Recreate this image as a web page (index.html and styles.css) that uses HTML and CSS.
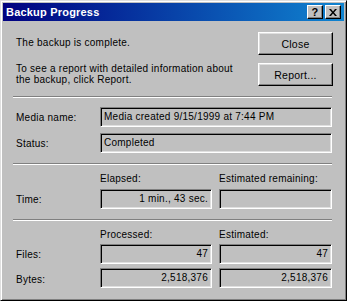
FILE: index.html
```html
<!DOCTYPE html>
<html lang="en">
<head>
    <meta charset="UTF-8">
    <meta name="viewport" content="width=device-width, initial-scale=1.0">
    <title>Backup Progress</title>
    <link rel="stylesheet" href="styles.css">
</head>
<body>
    <div class="window">
        <div class="titlebar">
            <span class="title">Backup Progress</span>
            <div class="title-buttons">
                <span class="tbtn help">?</span>
                <span class="tbtn">
                    <svg width="8" height="7" viewBox="0 0 8 7">
                        <path d="M0 0h2l2 2.5L6 0h2L5 3.5 8 7H6L4 4.5 2 7H0l3-3.5z" fill="#000"/>
                    </svg>
                </span>
            </div>
        </div>

        <div class="content">
            <div class="summary">
                <div class="messages">
                    <p>The backup is complete.</p>
                    <p class="report-note">To see a report with detailed information about<br>the backup, click Report.</p>
                </div>
                <div class="actions">
                    <button class="btn">Close</button>
                    <button class="btn">Report...</button>
                </div>
            </div>

            <div class="sep"></div>

            <div class="grid media">
                <span class="label">Media name:</span>
                <div class="field wide">Media created 9/15/1999 at 7:44 PM</div>
                <span class="label">Status:</span>
                <div class="field wide">Completed</div>
            </div>

            <div class="sep"></div>

            <div class="grid time">
                <span></span>
                <span class="colhead">Elapsed:</span>
                <span class="colhead">Estimated remaining:</span>
                <span class="label">Time:</span>
                <div class="field num">1 min., 43 sec.</div>
                <div class="field num"></div>
            </div>

            <div class="sep"></div>

            <div class="grid counts">
                <span></span>
                <span class="colhead">Processed:</span>
                <span class="colhead">Estimated:</span>
                <span class="label">Files:</span>
                <div class="field num">47</div>
                <div class="field num">47</div>
                <span class="label">Bytes:</span>
                <div class="field num">2,518,376</div>
                <div class="field num">2,518,376</div>
            </div>
        </div>
    </div>
</body>
</html>
```

FILE: styles.css
```css
body {
    margin: 0;
    background: #c0c0c0;
    font-family: "Liberation Sans", Arial, sans-serif;
    font-size: 10px;
    line-height: 11px;
    letter-spacing: 0.25px;
    color: #000;
}
.window {
    width: 347px;
    height: 301px;
    box-sizing: border-box;
    background: #c0c0c0;
    border-top: 1px solid #dfdfdf;
    border-left: 1px solid #dfdfdf;
    border-right: 1px solid #000;
    border-bottom: 1px solid #000;
    box-shadow: inset 1px 1px #fff, inset -1px -1px #808080;
    padding: 2px;
}
.titlebar {
    height: 18px;
    display: flex;
    align-items: center;
    justify-content: space-between;
    padding: 0 3px 0 3px;
    background: linear-gradient(to right, #000080, #1084d0);
}
.title {
    color: #fff;
    font-weight: bold;
    font-size: 11px;
    letter-spacing: 0.2px;
}
.title-buttons {
    display: flex;
    gap: 2px;
}
.tbtn {
    width: 16px;
    height: 14px;
    box-sizing: border-box;
    display: flex;
    align-items: center;
    justify-content: center;
    background: #c0c0c0;
    border-top: 1px solid #fff;
    border-left: 1px solid #fff;
    border-right: 1px solid #000;
    border-bottom: 1px solid #000;
    box-shadow: inset -1px -1px #808080;
}
.help {
    font-weight: bold;
    font-size: 11px;
}
.content {
    padding: 11px 12px 0 10px;
}
.summary {
    display: flex;
    justify-content: space-between;
}
.messages {
    padding: 5px 0 0 3px;
}
.messages p {
    margin: 0;
}
.report-note {
    margin-top: 15px !important;
}
.actions {
    display: flex;
    flex-direction: column;
    gap: 8px;
    margin-right: -1px;
}
.btn {
    width: 75px;
    height: 23px;
    padding: 0;
    font-family: inherit;
    font-size: 10.5px;
    letter-spacing: 0.25px;
    color: #000;
    background: #c0c0c0;
    border-top: 1px solid #fff;
    border-left: 1px solid #fff;
    border-right: 1px solid #000;
    border-bottom: 1px solid #000;
    box-shadow: inset -1px -1px #808080, inset 1px 1px #dfdfdf;
}
.sep {
    height: 0;
    border-top: 1px solid #808080;
    border-bottom: 1px solid #fff;
    margin-top: 10px;
}
.grid {
    display: grid;
    grid-template-columns: 80px 112px 113px;
    column-gap: 7px;
    align-items: center;
}
.media {
    margin-top: 9px;
    row-gap: 6px;
}
.time {
    margin-top: 8px;
    row-gap: 5px;
}
.counts {
    margin-top: 8px;
    row-gap: 4px;
}
.counts .field + .label {
    margin-top: 3px;
}
.label {
    padding-left: 3px;
}
.field {
    height: 20px;
    box-sizing: border-box;
    line-height: 18px;
    padding: 0 3px;
    white-space: nowrap;
    border-top: 1px solid #808080;
    border-left: 1px solid #808080;
    border-right: 1px solid #fff;
    border-bottom: 1px solid #fff;
    box-shadow: inset 1px 1px #000, inset -1px -1px #dfdfdf;
}
.wide {
    grid-column: 2 / 4;
}
.num {
    text-align: right;
}
```
